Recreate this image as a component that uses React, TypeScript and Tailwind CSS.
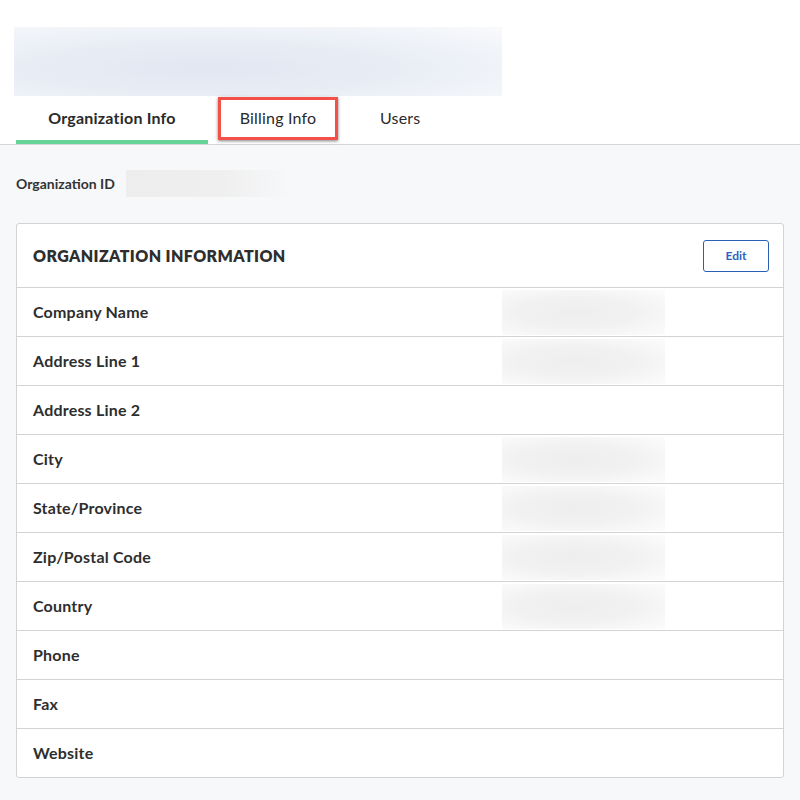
const rows: { label: string; blurred: boolean }[] = [
  { label: 'Company Name', blurred: true },
  { label: 'Address Line 1', blurred: true },
  { label: 'Address Line 2', blurred: false },
  { label: 'City', blurred: true },
  { label: 'State/Province', blurred: true },
  { label: 'Zip/Postal Code', blurred: true },
  { label: 'Country', blurred: true },
  { label: 'Phone', blurred: false },
  { label: 'Fax', blurred: false },
  { label: 'Website', blurred: false },
];

export default function App() {
  return (
    <div className="min-h-[800px] bg-[#f7f8fa] font-['Lato','Open_Sans',sans-serif] text-[#2e2e2e]">
      {/* Header */}
      <div className="bg-white border-b border-[#d6d6d6]">
        <div className="pt-[27px] pl-[14px]">
          <div className="h-[69px] w-[488px] bg-[radial-gradient(ellipse_at_40%_60%,#e1e7f1_0%,#e8edf5_45%,#f4f6fa_85%,#f9fafc_100%)]" />
        </div>
        <div className="flex px-4 text-[16px] tracking-[0.2px]">
          <div className="h-12 w-[192px] flex items-center justify-center border-b-4 border-[#66d398] font-bold text-[#2a2a2a]">
            Organization Info
          </div>
          <div className="relative h-12 w-[140px] flex items-center justify-center text-[#2a2a2a] pb-1">
            Billing Info
            <div className="absolute left-[10px] top-[1px] w-[120px] h-[43px] border-[3px] border-[#f4504a] shadow-[0_1px_3px_rgba(0,0,0,0.5)]" />
          </div>
          <div className="h-12 px-8 flex items-center text-[#2a2a2a] pb-1">Users</div>
        </div>
      </div>

      {/* Content */}
      <div className="px-4 pt-[25px] pb-[23px]">
        <div className="flex items-center h-[27px]">
          <span className="w-[110px] text-[14px] font-bold text-[#333]">Organization ID</span>
          <div className="h-[27px] w-[164px] bg-[linear-gradient(90deg,#ededed_0%,#efefef_60%,#f7f8fa_100%)]" />
        </div>

        <div className="mt-[26px] bg-white border border-[#d3d3d3] rounded-[3px]">
          <div className="h-16 flex items-center justify-between pl-4 pr-[14px] border-b border-[#d3d3d3]">
            <h2 className="text-[16px] font-extrabold tracking-[0.4px] text-[#2e2e2e]">ORGANIZATION INFORMATION</h2>
            <button
              type="button"
              className="h-8 w-[66px] rounded-[3px] border border-[#2b5fb3] text-[12px] font-bold text-[#2d63c0] bg-white"
            >
              Edit
            </button>
          </div>
          {rows.map((row, i) => {
            const last = i === rows.length - 1;
            return (
              <div
                key={row.label}
                className={`flex items-center pl-4 ${last ? 'h-12' : 'h-[49px] border-b border-[#d3d3d3]'}`}
              >
                <span className="w-[469px] text-[16px] font-bold tracking-[0.2px] text-[#2e2e2e]">{row.label}</span>
                {row.blurred && (
                  <div className="h-[45px] w-[163px] bg-[radial-gradient(ellipse_at_45%_50%,#eeeeee_0%,#f1f1f1_45%,#f8f8f8_80%,#fcfcfc_100%)]" />
                )}
              </div>
            );
          })}
        </div>
      </div>
    </div>
  );
}
